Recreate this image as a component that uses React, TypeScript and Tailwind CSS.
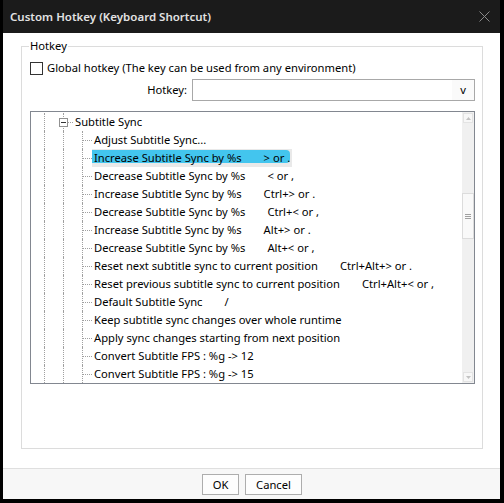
import React from "react";

type Entry = { label: string; keys?: string };

const entries: Entry[] = [
  { label: "Adjust Subtitle Sync..." },
  { label: "Increase Subtitle Sync by %s", keys: "> or ." },
  { label: "Decrease Subtitle Sync by %s", keys: "< or ," },
  { label: "Increase Subtitle Sync by %s", keys: "Ctrl+> or ." },
  { label: "Decrease Subtitle Sync by %s", keys: "Ctrl+< or ," },
  { label: "Increase Subtitle Sync by %s", keys: "Alt+> or ." },
  { label: "Decrease Subtitle Sync by %s", keys: "Alt+< or ," },
  { label: "Reset next subtitle sync to current position", keys: "Ctrl+Alt+> or ." },
  { label: "Reset previous subtitle sync to current position", keys: "Ctrl+Alt+< or ," },
  { label: "Default Subtitle Sync", keys: "/" },
  { label: "Keep subtitle sync changes over whole runtime" },
  { label: "Apply sync changes starting from next position" },
  { label: "Convert Subtitle FPS : %g -> 12" },
  { label: "Convert Subtitle FPS : %g -> 15" },
];

const SELECTED = 1;

// one indentation column of the tree with its dotted guide line
const Guide = () => (
  <div className="relative h-full w-[19px] shrink-0">
    <div className="absolute left-[13px] top-0 h-full border-l border-dotted border-[#a0a0a0]" />
  </div>
);

const Branch = ({ expander }: { expander?: boolean }) => (
  <div className="relative h-full w-[23px] shrink-0">
    <div className="absolute left-[13px] top-0 h-full border-l border-dotted border-[#a0a0a0]" />
    <div className="absolute left-[14px] top-[9px] w-[9px] border-t border-dotted border-[#a0a0a0]" />
    {expander && (
      <div className="absolute left-[9px] top-[5px] flex h-[9px] w-[9px] items-center justify-center border border-[#919191] bg-white">
        <div className="h-px w-[5px] bg-[#333]" />
      </div>
    )}
  </div>
);

const ScrollArrow = ({ down }: { down?: boolean }) => (
  <div className="m-px flex h-[10px] w-[10px] items-center justify-center border border-[#e3e3e3] bg-[#f7f7f7]">
    <svg width="5" height="3" viewBox="0 0 5 3">
      <path d={down ? "M0 0h5L2.5 3z" : "M0 3h5L2.5 0z"} fill="#c2c2c2" />
    </svg>
  </div>
);

export default function App() {
  return (
    <div className="flex h-[503px] w-[504px] flex-col bg-black pb-[4px] pl-[3px] pr-[4px] font-['Noto_Sans',sans-serif] text-[11.2px] text-black">
      {/* title bar */}
      <div className="flex h-[33px] shrink-0 items-center justify-between bg-[#1b1b1b] pl-[7px] pr-[10px]">
        <span className="text-[11.5px] font-semibold text-[#e2e2e2]">Custom Hotkey (Keyboard Shortcut)</span>
        <svg width="11" height="11" viewBox="0 0 11 11">
          <path d="M0.5 0.5l10 10M10.5 0.5l-10 10" stroke="#8a8a8a" strokeWidth="1" />
        </svg>
      </div>

      <div className="flex flex-1 flex-col bg-white">
        <div className="flex-1 pl-[18px] pr-[17px] pt-[13px]">
          {/* Hotkey group */}
          <div className="relative h-[403px] border border-[#dcdcdc] pl-[8px] pr-[7px]">
            <span className="absolute left-[7px] top-[-9px] bg-white px-px leading-[16px]">Hotkey</span>

            <div className="mt-[13px] flex h-[16px] items-center">
              <div className="h-[13px] w-[13px] border border-[#333] bg-white" />
              <span className="ml-[4px] leading-[16px]">Global hotkey (The key can be used from any environment)</span>
            </div>

            <div className="mt-[3px] flex h-[22px] items-center">
              <span className="w-[157px] text-right">Hotkey:</span>
              <div className="ml-[5px] flex h-full flex-1 items-center justify-end border border-[#a8a8a8] bg-white">
                <div className="flex h-full w-[22px] items-center justify-center bg-[#fafafa]">v</div>
              </div>
            </div>

            {/* command tree */}
            <div className="mt-[10px] flex h-[273px] border border-[#828790] bg-white">
              <div className="flex-1 overflow-hidden pt-px">
                <div className="flex h-[18px] items-center">
                  <Guide />
                  <Branch expander />
                  <span className="whitespace-nowrap pl-[2px] leading-[18px]">Subtitle Sync</span>
                </div>
                {entries.map((e, i) => (
                  <div key={i} className="flex h-[18px] items-center">
                    <Guide />
                    <Guide />
                    <Branch />
                    <span
                      className={
                        i === SELECTED
                          ? "relative flex h-[18px] items-center whitespace-nowrap bg-[#e9e9e9] px-[2px]"
                          : "flex h-[18px] items-center whitespace-nowrap px-[2px]"
                      }
                    >
                      {i === SELECTED && (
                        <span className="absolute left-0 right-[2px] top-[1px] h-[13px] rounded-r-[4px] bg-[#43c5ee]" />
                      )}
                      <span className="relative">{e.label}</span>
                      {e.keys && <span className="relative ml-[22px]">{e.keys}</span>}
                    </span>
                  </div>
                ))}
              </div>

              {/* vertical scrollbar */}
              <div className="flex w-[12px] flex-col bg-[#f0f0f0]">
                <ScrollArrow />
                <div className="mt-[69px] flex h-[46px] items-center justify-center border border-[#dcdcdc] bg-[#f9f9f9]">
                  <div className="flex w-[6px] flex-col gap-[1px]">
                    <div className="h-px bg-[#a0a0a0]" />
                    <div className="h-px bg-[#a0a0a0]" />
                    <div className="h-px bg-[#a0a0a0]" />
                  </div>
                </div>
                <div className="flex-1" />
                <ScrollArrow down />
              </div>
            </div>
          </div>
        </div>

        {/* button strip */}
        <div className="flex h-[31px] shrink-0 items-center justify-center gap-[6px] border-t border-[#dfdfdf] bg-[#f7f7f7] pl-[1px] pt-px">
          <button className="h-[21px] w-[37px] border border-[#adadad] bg-[#fdfdfd] leading-[19px]">OK</button>
          <button className="h-[21px] w-[57px] border border-[#adadad] bg-[#fdfdfd] leading-[19px]">Cancel</button>
        </div>
      </div>
    </div>
  );
}
